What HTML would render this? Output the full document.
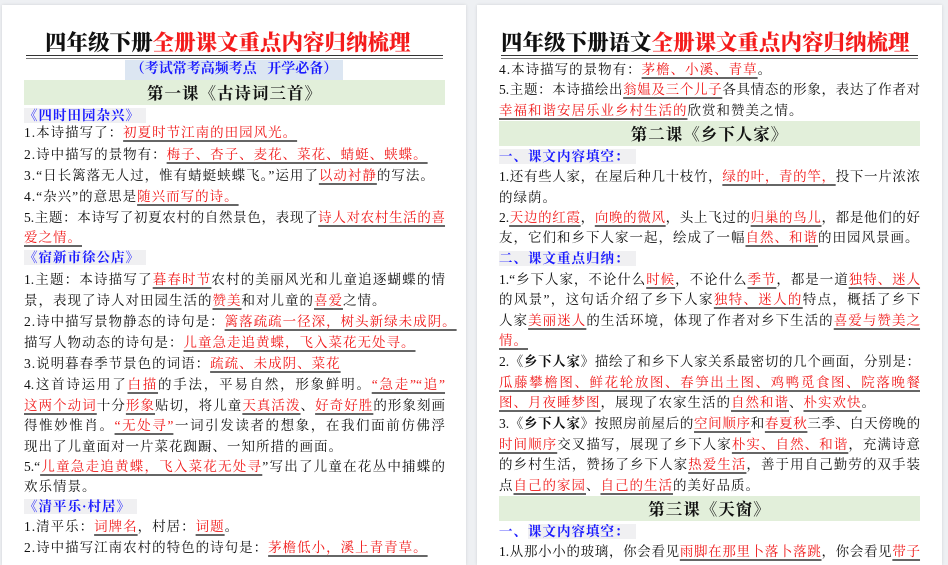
<!DOCTYPE html>
<html><head><meta charset="utf-8"><style>
body{margin:0;width:948px;height:552px;background:#eef0f3;overflow:hidden;position:relative;font-family:"Liberation Serif","Noto Serif CJK SC",serif;color:#111}
.pg{position:absolute;top:5px;height:560px;background:#fff;box-shadow:0 0 3px rgba(0,0,0,.12)}
.L{position:absolute;width:421px;height:20px;line-height:20px;font-size:13.5px;letter-spacing:1px;white-space:nowrap;text-align:left}
.j{text-align:justify;text-align-last:justify;letter-spacing:0}
.r{color:#f01818;text-decoration:underline;text-decoration-color:#666;text-decoration-thickness:1.5px;text-underline-offset:3px}
.t{position:absolute;font-family:"Noto Serif CJK SC",serif;font-weight:900;font-size:21.5px;white-space:nowrap;line-height:26px}
.t span{color:#f41c1c}
.dl{position:absolute;height:2px;border-top:1.5px solid #333;border-bottom:1.5px solid #777;}
.gh{position:absolute;width:421px;height:25px;background:#e2efda;text-align:center;line-height:25px;font-size:16.5px;font-weight:bold;font-family:"Noto Serif CJK SC",serif;letter-spacing:1px}
.bh{color:#1a1aff;font-weight:bold;background:#f0f0f2;padding-right:6px}
</style></head><body>
<div class="pg" style="left:2px;width:464px"></div>
<div class="pg" style="left:477px;width:465px"></div>

<!-- LEFT -->
<div class="t" style="left:45px;top:29px">四年级下册<span>全册课文重点内容归纳梳理</span></div>
<div class="dl" style="left:26px;top:55px;width:417px"></div>
<div style="position:absolute;left:125px;top:60px;width:218px;height:20px;background:#dce6f2;color:#1a1aff;font-weight:bold;font-size:14px;line-height:20px;text-align:center;white-space:nowrap">（考试常考高频考点&nbsp;&nbsp;&nbsp;开学必备）</div>
<div class="gh" style="left:24px;top:80px">第一课《古诗词三首》</div>
<div class="L" style="left:24px;top:106px"><span class="bh">《四时田园杂兴》</span></div>
<div class="L" style="left:24px;top:123px">1.本诗描写了：<span class="r">初夏时节江南的田园风光。</span></div>
<div class="L" style="left:24px;top:145px">2.诗中描写的景物有：<span class="r">梅子、杏子、麦花、菜花、蜻蜓、蛱蝶。</span></div>
<div class="L" style="left:24px;top:166px">3.“日长篱落无人过，惟有蜻蜓蛱蝶飞。”运用了<span class="r">以动衬静</span>的写法。</div>
<div class="L" style="left:24px;top:187px">4.“杂兴”的意思是<span class="r">随兴而写的诗。</span></div>
<div class="L j" style="left:24px;top:208px">5.主题：本诗写了初夏农村的自然景色，表现了<span class="r">诗人对农村生活的喜</span></div>
<div class="L" style="left:24px;top:228px"><span class="r">爱之情。</span></div>
<div class="L" style="left:24px;top:248px"><span class="bh">《宿新市徐公店》</span></div>
<div class="L j" style="left:24px;top:270px">1.主题：本诗描写了<span class="r">暮春时节</span>农村的美丽风光和儿童追逐蝴蝶的情</div>
<div class="L" style="left:24px;top:291px">景，表现了诗人对田园生活的<span class="r">赞美</span>和对儿童的<span class="r">喜爱</span>之情。</div>
<div class="L" style="left:24px;top:312px">2.诗中描写景物静态的诗句是：<span class="r">篱落疏疏一径深，树头新绿未成阴。</span></div>
<div class="L" style="left:24px;top:333px">描写人物动态的诗句是：<span class="r">儿童急走追黄蝶，飞入菜花无处寻。</span></div>
<div class="L" style="left:24px;top:354px">3.说明暮春季节景色的词语：<span class="r">疏疏、未成阴、菜花</span></div>
<div class="L j" style="left:24px;top:375px">4.这首诗运用了<span class="r">白描</span>的手法，平易自然，形象鲜明。<span class="r">“急走”“追”</span></div>
<div class="L j" style="left:24px;top:396px"><span class="r">这两个动词</span>十分<span class="r">形象</span>贴切，将儿童<span class="r">天真活泼</span>、<span class="r">好奇好胜</span>的形象刻画</div>
<div class="L j" style="left:24px;top:416px">得惟妙惟肖。<span class="r">“无处寻”</span>一词引发读者的想象，在我们面前仿佛浮</div>
<div class="L" style="left:24px;top:437px">现出了儿童面对一片菜花踟蹰、一知所措的画面。</div>
<div class="L j" style="left:24px;top:457px">5.“<span class="r">儿童急走追黄蝶，飞入菜花无处寻</span>”写出了儿童在花丛中捕蝶的</div>
<div class="L" style="left:24px;top:477px">欢乐情景。</div>
<div class="L" style="left:24px;top:497px"><span class="bh">《清平乐·村居》</span></div>
<div class="L" style="left:24px;top:517px">1.清平乐：<span class="r">词牌名</span>，村居：<span class="r">词题</span>。</div>
<div class="L" style="left:24px;top:538px">2.诗中描写江南农村的特色的诗句是：<span class="r">茅檐低小，溪上青青草。</span></div>

<!-- RIGHT -->
<div class="t" style="left:501px;top:29px">四年级下册语文<span>全册课文重点内容归纳梳理</span></div>
<div class="dl" style="left:501px;top:55px;width:417px"></div>
<div class="L" style="left:499px;top:60px">4.本诗描写的景物有：<span class="r">茅檐、小溪、青草</span>。</div>
<div class="L j" style="left:499px;top:80px">5.主题：本诗描绘出<span class="r">翁媪及三个儿子</span>各具情态的形象，表达了作者对</div>
<div class="L" style="left:499px;top:101px"><span class="r">幸福和谐安居乐业乡村生活的</span>欣赏和赞美之情。</div>
<div class="gh" style="left:499px;top:121px">第二课《乡下人家》</div>
<div class="L" style="left:499px;top:147px"><span class="bh">一、课文内容填空：</span></div>
<div class="L j" style="left:499px;top:167px">1.还有些人家，在屋后种几十枝竹，<span class="r">绿的叶，青的竿，</span>投下一片浓浓</div>
<div class="L" style="left:499px;top:188px">的绿荫。</div>
<div class="L j" style="left:499px;top:208px">2.<span class="r">天边的红霞</span>，<span class="r">向晚的微风</span>，头上飞过的<span class="r">归巢的鸟儿</span>，都是他们的好</div>
<div class="L" style="left:499px;top:228px">友，它们和乡下人家一起，绘成了一幅<span class="r">自然、和谐</span>的田园风景画。</div>
<div class="L" style="left:499px;top:249px"><span class="bh">二、课文重点归纳：</span></div>
<div class="L j" style="left:499px;top:270px">1.“乡下人家，不论什么<span class="r">时候</span>，不论什么<span class="r">季节</span>，都是一道<span class="r">独特、迷人</span></div>
<div class="L j" style="left:499px;top:290px">的风景”，这句话介绍了乡下人家<span class="r">独特、迷人的</span>特点，概括了乡下</div>
<div class="L j" style="left:499px;top:311px">人家<span class="r">美丽迷人</span>的生活环境，体现了作者对乡下生活的<span class="r">喜爱与赞美之</span></div>
<div class="L" style="left:499px;top:331px"><span class="r">情。</span></div>
<div class="L j" style="left:499px;top:352px">2.《<b>乡下人家</b>》描绘了和乡下人家关系最密切的几个画面，分别是：</div>
<div class="L j" style="left:499px;top:373px"><span class="r">瓜藤攀檐图、鲜花轮放图、春笋出土图、鸡鸭觅食图、院落晚餐</span></div>
<div class="L" style="left:499px;top:393px"><span class="r">图、月夜睡梦图</span>，展现了农家生活的<span class="r">自然和谐</span>、<span class="r">朴实欢快</span>。</div>
<div class="L j" style="left:499px;top:414px">3.《<b>乡下人家</b>》按照房前屋后的<span class="r">空间顺序</span>和<span class="r">春夏秋</span>三季、白天傍晚的</div>
<div class="L j" style="left:499px;top:435px"><span class="r">时间顺序</span>交叉描写，展现了乡下人家<span class="r">朴实、自然、和谐</span>，充满诗意</div>
<div class="L j" style="left:499px;top:455px">的乡村生活，赞扬了乡下人家<span class="r">热爱生活</span>，善于用自己勤劳的双手装</div>
<div class="L" style="left:499px;top:476px">点<span class="r">自己的家园</span>、<span class="r">自己的生活</span>的美好品质。</div>
<div class="gh" style="left:499px;top:496px">第三课《天窗》</div>
<div class="L" style="left:499px;top:522px"><span style="color:#1a1aff;font-weight:bold">一、</span><span class="bh">课文内容填空：</span></div>
<div class="L j" style="left:499px;top:542px">1.从那小小的玻璃，你会看见<span class="r">雨脚在那里卜落卜落跳</span>，你会看见<span class="r">带子</span></div>
</body></html>
